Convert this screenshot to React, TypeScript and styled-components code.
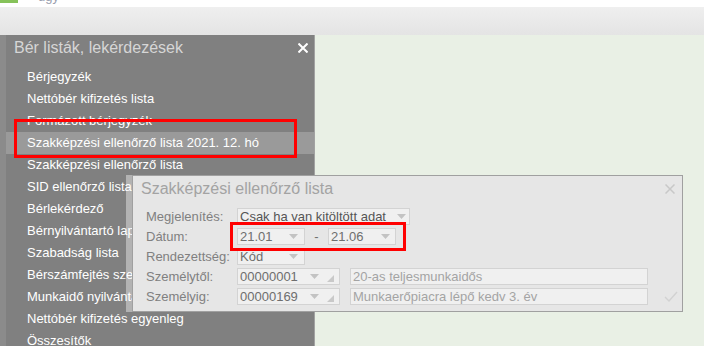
import React from "react";
import styled, { createGlobalStyle } from "styled-components";

const GlobalStyle = createGlobalStyle`
  html, body { margin: 0; padding: 0; }
  body { font-family: "Liberation Sans", Arial, sans-serif; background: #fff; }
`;

const Screen = styled.div`
  width: 704px;
  height: 346px;
  overflow: hidden;
  display: flex;
  flex-direction: column;
`;

const TopStrip = styled.div`
  height: 7px;
  flex: none;
  background: #fff;
  display: flex;
  align-items: flex-start;
  overflow: hidden;
`;

const AppMark = styled.div`
  width: 18px;
  height: 3px;
  background: #86c25a;
`;

const AppTitle = styled.span`
  margin: -10px 0 0 20px;
  font-size: 13px;
  line-height: 13px;
  color: #9aa0ae;
`;

const Toolbar = styled.div`
  height: 28px;
  flex: none;
  background: linear-gradient(#efefef, #e4e4e4);
`;

const Workspace = styled.div`
  flex: 1;
  min-height: 0;
  display: flex;
  position: relative;
  background: #e9f0e5;
`;

const Gutter = styled.div`
  width: 6px;
  background: #8b8b8b;
`;

const Panel = styled.div`
  width: 308px;
  background: #808080;
  border-right: 1px solid #a2a2a2;
  display: flex;
  flex-direction: column;
  overflow: hidden;
`;

const PanelHeader = styled.div`
  height: 25px;
  flex: none;
  display: flex;
  align-items: center;
  justify-content: space-between;
  padding: 0 6px 0 8px;
`;

const PanelTitle = styled.span`
  font-size: 16px;
  color: #d6d6d6;
`;

const Menu = styled.ul`
  list-style: none;
  flex: none;
  margin: 6px 0 0;
  padding: 0;
`;

const MenuItem = styled.li<{ $active?: boolean }>`
  height: 22px;
  line-height: 22px;
  padding-left: 21px;
  font-size: 13px;
  color: #fff;
  white-space: nowrap;
  background: ${(p) => (p.$active ? "#9a9a9a" : "transparent")};
`;

const Annotation = styled.div<{ $l: number; $t: number; $w: number; $h: number }>`
  position: absolute;
  left: ${(p) => p.$l}px;
  top: ${(p) => p.$t}px;
  width: ${(p) => p.$w}px;
  height: ${(p) => p.$h}px;
  box-sizing: border-box;
  border: 3px solid #ff0000;
  pointer-events: none;
`;

const Dialog = styled.div`
  position: absolute;
  left: 132px;
  top: 140px;
  width: 551px;
  height: 137px;
  box-sizing: border-box;
  background: #e6e6e6;
  border: 1px solid #a0a0a0;
  box-shadow: -6px 0 0 rgba(255, 255, 255, 0.4);
  display: flex;
  flex-direction: column;
`;

const DialogHeader = styled.div`
  height: 25px;
  flex: none;
  display: flex;
  align-items: center;
  justify-content: space-between;
  padding: 0 7px 0 8px;
`;

const DialogTitle = styled.span`
  font-size: 16px;
  color: #a3a3a3;
`;

const Form = styled.div`
  margin-top: 7px;
  padding-left: 13px;
  display: flex;
  flex-direction: column;
  gap: 3px;
`;

const Row = styled.div`
  height: 17px;
  flex: none;
  display: flex;
  align-items: center;
`;

const Label = styled.span`
  width: 91px;
  flex: none;
  font-size: 13px;
  color: #808080;
  white-space: nowrap;
`;

const Field = styled.div<{ $w: number; $tone: "dark" | "mid" | "light" }>`
  width: ${(p) => p.$w}px;
  height: 17px;
  flex: none;
  box-sizing: border-box;
  border: 1px solid #d3d3d3;
  background: #f0f0f0;
  display: flex;
  align-items: center;
  padding-left: 2px;
  font-size: 13px;
  white-space: nowrap;
  overflow: hidden;
  position: relative;
  color: ${(p) => (p.$tone === "dark" ? "#555" : p.$tone === "mid" ? "#6e6e6e" : "#a4a4a4")};
`;

const Gap = styled.div<{ $w: number }>`
  width: ${(p) => p.$w}px;
  flex: none;
`;

const Dash = styled.span`
  width: 23px;
  flex: none;
  text-align: center;
  font-size: 13px;
  color: #707070;
`;

const ArrowBox = styled.span<{ $right: number }>`
  margin-left: auto;
  margin-right: ${(p) => p.$right}px;
  display: flex;
`;

const GripBox = styled.span`
  position: absolute;
  right: 5px;
  bottom: 2px;
  display: flex;
`;

const IconSlot = styled.span<{ $ml?: number }>`
  display: flex;
  margin-left: ${(p) => p.$ml ?? 0}px;
`;

const Arrow = ({ right }: { right: number }) => (
  <ArrowBox $right={right}>
    <svg width="9" height="5" viewBox="0 0 9 5">
      <path d="M0 0 H9 L4.5 5 Z" fill="#c3c3c3" />
    </svg>
  </ArrowBox>
);

const Grip = () => (
  <GripBox>
    <svg width="7" height="7" viewBox="0 0 7 7">
      <path d="M7 0 V7 H0 Z" fill="#c9c9c9" />
    </svg>
  </GripBox>
);

const CloseX = ({ color, stroke }: { color: string; stroke: number }) => (
  <svg width="10" height="10" viewBox="0 0 10 10">
    <path d="M0.5 0.5 L9.5 9.5 M9.5 0.5 L0.5 9.5" stroke={color} strokeWidth={stroke} fill="none" />
  </svg>
);

const Check = () => (
  <svg width="14" height="11" viewBox="0 0 14 11">
    <path d="M1 6 L5 10 L13 1" stroke="#d2d2d2" strokeWidth="1.4" fill="none" />
  </svg>
);

const menuItems = [
  "Bérjegyzék",
  "Nettóbér kifizetés lista",
  "Formázott bérjegyzék",
  "Szakképzési ellenőrző lista 2021. 12. hó",
  "Szakképzési ellenőrző lista",
  "SID ellenőrző lista",
  "Bérlekérdező",
  "Bérnyilvántartó lap",
  "Szabadság lista",
  "Bérszámfejtés szerinti lista",
  "Munkaidő nyilvántartás",
  "Nettóbér kifizetés egyenleg",
  "Összesítők",
];

export default function App() {
  return (
    <>
      <GlobalStyle />
      <Screen>
        <TopStrip>
          <AppMark />
          <AppTitle>ügy</AppTitle>
        </TopStrip>
        <Toolbar />
        <Workspace>
          <Gutter />
          <Panel>
            <PanelHeader>
              <PanelTitle>Bér listák, lekérdezések</PanelTitle>
              <CloseX color="#ffffff" stroke={2} />
            </PanelHeader>
            <Menu>
              {menuItems.map((m, i) => (
                <MenuItem key={m} $active={i === 3}>
                  {m}
                </MenuItem>
              ))}
            </Menu>
          </Panel>
          <Annotation $l={14} $t={84} $w={283} $h={39} />

          <Dialog>
            <DialogHeader>
              <DialogTitle>Szakképzési ellenőrző lista</DialogTitle>
              <CloseX color="#c8c8c8" stroke={1.5} />
            </DialogHeader>
            <Form>
              <Row>
                <Label>Megjelenítés:</Label>
                <Field $w={173} $tone="dark">
                  Csak ha van kitöltött adat
                  <Arrow right={3} />
                </Field>
              </Row>
              <Row>
                <Label>Dátum:</Label>
                <Field $w={68} $tone="mid">
                  21.01
                  <Arrow right={6} />
                </Field>
                <Dash>-</Dash>
                <Field $w={68} $tone="mid">
                  21.06
                  <Arrow right={5} />
                </Field>
              </Row>
              <Row>
                <Label>Rendezettség:</Label>
                <Field $w={68} $tone="mid">
                  Kód
                  <Arrow right={6} />
                </Field>
              </Row>
              <Row>
                <Label>Személytől:</Label>
                <Field $w={103} $tone="mid">
                  00000001
                  <Arrow right={20} />
                  <Grip />
                </Field>
                <Gap $w={10} />
                <Field $w={298} $tone="light">
                  20-as teljesmunkaidős
                </Field>
              </Row>
              <Row>
                <Label>Személyig:</Label>
                <Field $w={103} $tone="mid">
                  00000169
                  <Arrow right={20} />
                  <Grip />
                </Field>
                <Gap $w={10} />
                <Field $w={298} $tone="light">
                  Munkaerőpiacra lépő kedv 3. év
                </Field>
                <IconSlot $ml={16}>
                  <Check />
                </IconSlot>
              </Row>
            </Form>
          </Dialog>
          <Annotation $l={230} $t={187} $w={176} $h={29} />
        </Workspace>
      </Screen>
    </>
  );
}
